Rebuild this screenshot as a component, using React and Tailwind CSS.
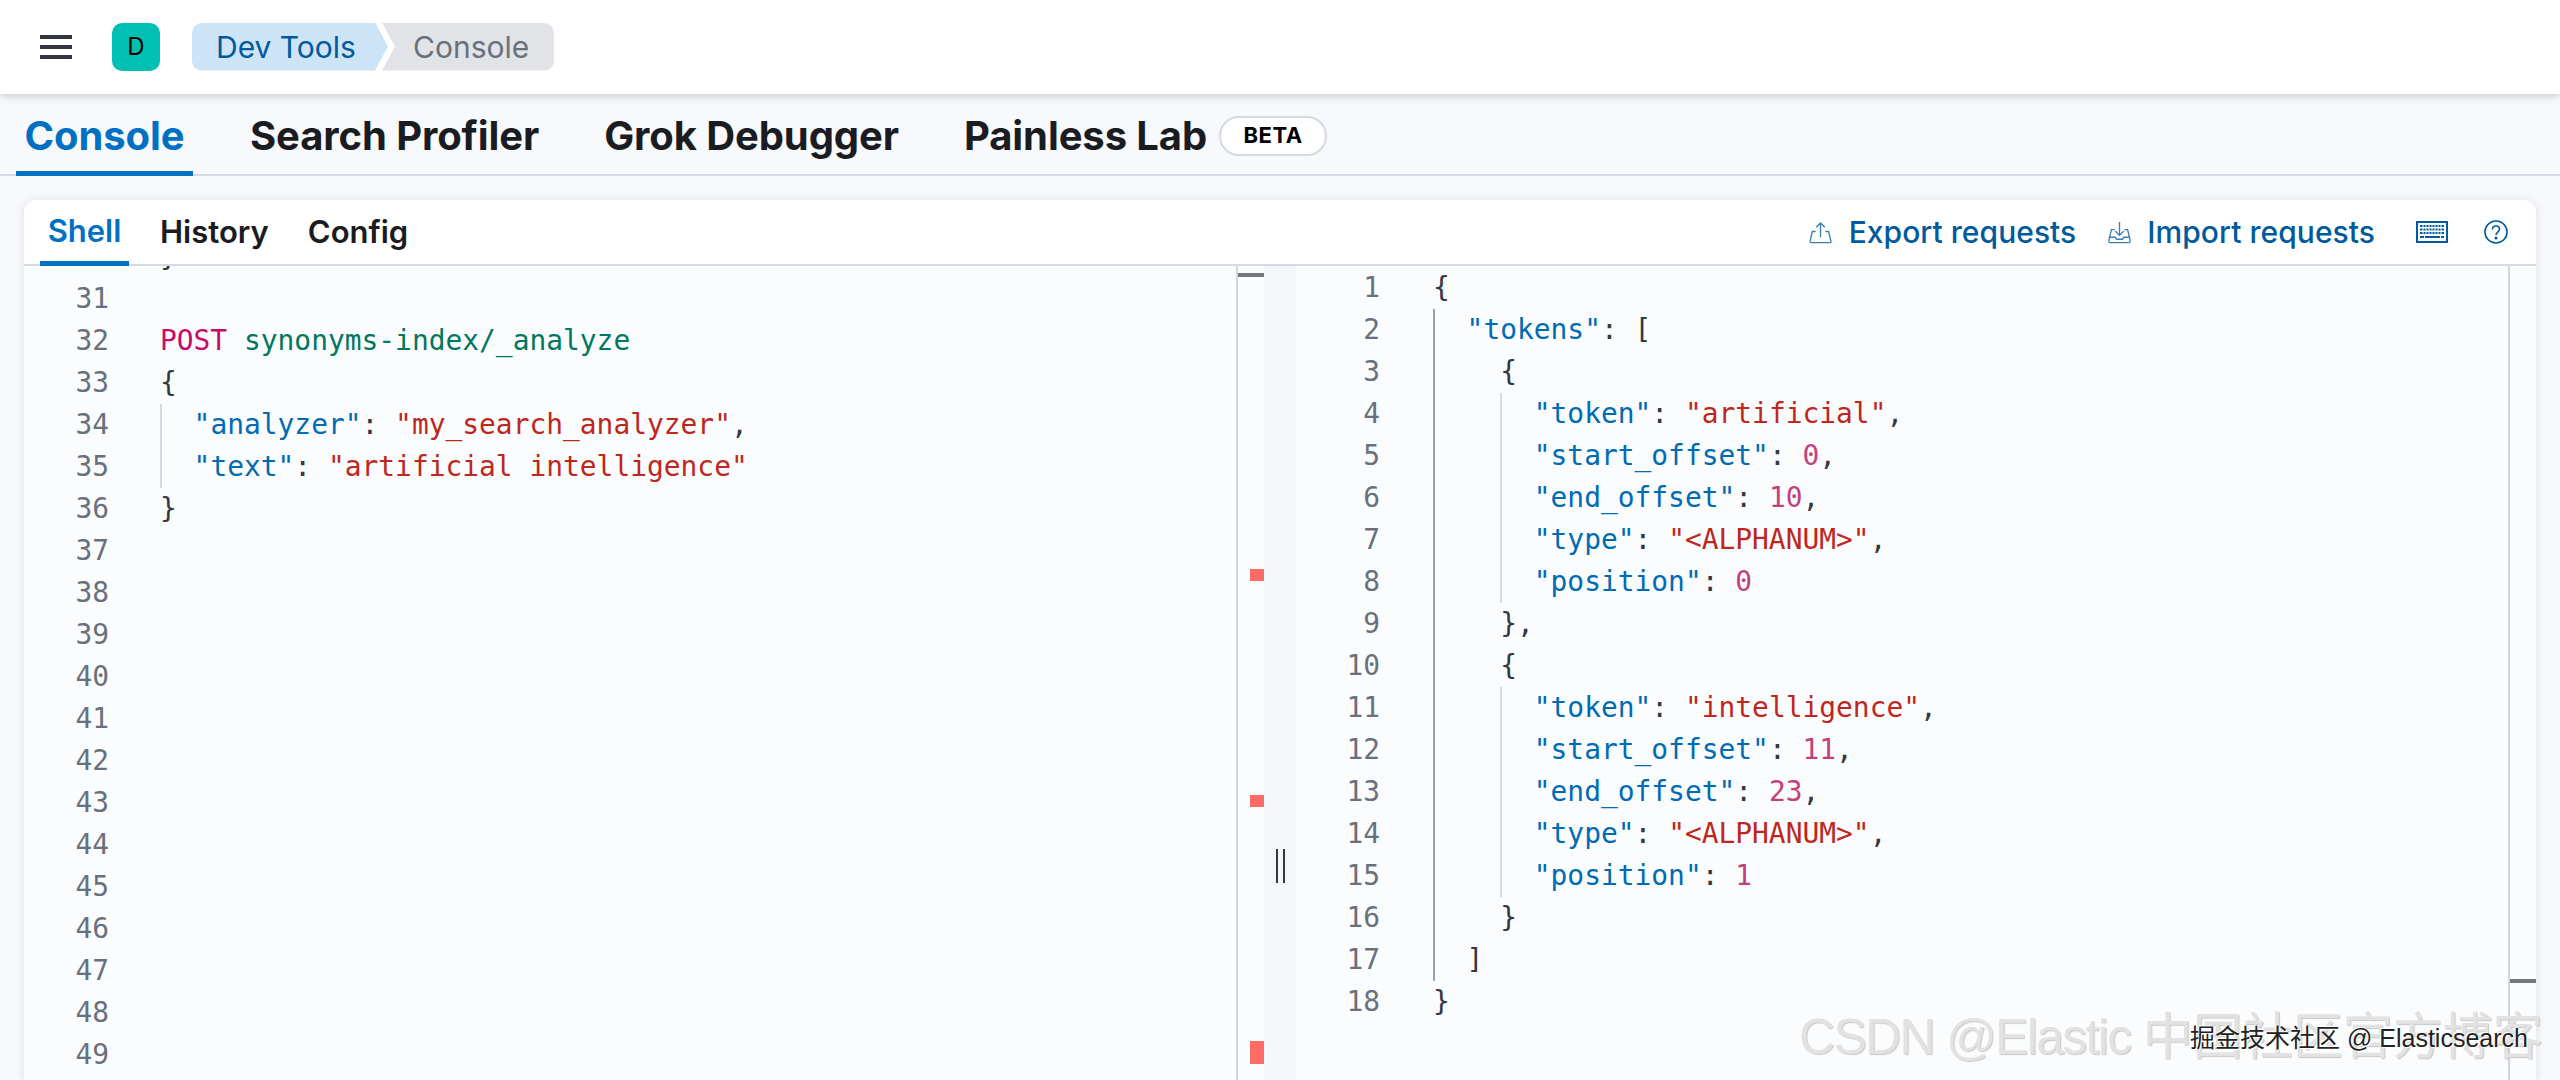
import React from "react";

const K = "text-[#006bb4]";
const S = "text-[#bd271e]";
const N = "text-[#c4407c]";
const P = "text-[#343741]";

const q = (t) => [`"${t}"`, K];
const v = (t) => [`"${t}"`, S];
const p = (t) => [t, P];
const n = (t) => [t, N];

const leftLines = [
  { no: 30, guides: [], toks: [p("}")] },
  { no: 31, guides: [], toks: [] },
  { no: 32, guides: [], toks: [["POST", "text-[#c80a68]"], p(" "), ["synonyms-index/_analyze", "text-[#00775f]"]] },
  { no: 33, guides: [], toks: [p("{")] },
  { no: 34, guides: ["l"], toks: [q("analyzer"), p(": "), v("my_search_analyzer"), p(",")] },
  { no: 35, guides: ["l"], toks: [q("text"), p(": "), v("artificial intelligence")] },
  { no: 36, guides: [], toks: [p("}")] },
  ...[37, 38, 39, 40, 41, 42, 43, 44, 45, 46, 47, 48, 49].map((no) => ({ no, guides: [], toks: [] })),
];

const obj = (start, token, so, eo, pos, last) => [
  { no: start, guides: ["d", "e"], toks: [p("{")] },
  { no: start + 1, guides: ["d", "e", "l"], toks: [q("token"), p(": "), v(token), p(",")] },
  { no: start + 2, guides: ["d", "e", "l"], toks: [q("start_offset"), p(": "), n(so), p(",")] },
  { no: start + 3, guides: ["d", "e", "l"], toks: [q("end_offset"), p(": "), n(eo), p(",")] },
  { no: start + 4, guides: ["d", "e", "l"], toks: [q("type"), p(": "), v("<ALPHANUM>"), p(",")] },
  { no: start + 5, guides: ["d", "e", "l"], toks: [q("position"), p(": "), n(pos)] },
  { no: start + 6, guides: ["d", "e"], toks: [p(last ? "}" : "},")] },
];

const rightLines = [
  { no: 1, guides: [], toks: [p("{")] },
  { no: 2, guides: ["d"], toks: [q("tokens"), p(": [")] },
  ...obj(3, "artificial", "0", "10", "0", false),
  ...obj(10, "intelligence", "11", "23", "1", true),
  { no: 17, guides: ["d"], toks: [p("]")] },
  { no: 18, guides: [], toks: [p("}")] },
];

function Guide({ kind }) {
  if (kind === "d") return <span className="inline-block h-[42px] w-[33.6px] shrink-0 border-l-2 border-[#98a2b3]" />;
  if (kind === "l") return <span className="inline-block h-[42px] w-[33.6px] shrink-0 border-l-2 border-[#d3dae6]" />;
  return <span className="inline-block h-[42px] w-[33.6px] shrink-0" />;
}

function CodeLine({ line, gutter, pad }) {
  return (
    <div className="flex h-[42px] shrink-0 leading-[42px] whitespace-pre">
      <div className={`${gutter} shrink-0 text-right text-[#69707d]`}>{line.no}</div>
      <div className={`${pad} shrink-0`} />
      <div className="flex">
        {line.guides.map((g, i) => (
          <Guide key={i} kind={g} />
        ))}
        <span>
          {line.toks.map(([t, c], i) => (
            <span key={i} className={c}>
              {t}
            </span>
          ))}
        </span>
      </div>
    </div>
  );
}

function ExportIcon() {
  return (
    <svg width="23" height="23" viewBox="0 0 24 24" fill="none" stroke="#3f7fb0" strokeWidth="1.4">
      <path d="M7 11H3.500L1 21.500a1 1 0 0 0 1 1h20a1 1 0 0 0 1-1L20.500 11H17" />
      <path d="M12 17V2M7.500 6.500 12 2l4.500 4.500" />
    </svg>
  );
}

function ImportIcon() {
  return (
    <svg width="23" height="23" viewBox="0 0 24 24" fill="none" stroke="#3f7fb0" strokeWidth="1.4">
      <path d="M7 9H3.500L1 20v1.500a1 1 0 0 0 1 1h20a1 1 0 0 0 1-1V20L20.500 9H17" />
      <path d="M1 17h6.500l1.500 2h6l1.500-2H23" />
      <path d="M12 15V1M7.500 10.500 12 15l4.500-4.500" />
    </svg>
  );
}

function KeyboardIcon() {
  return (
    <svg width="32" height="22" viewBox="0 0 32 22">
      <rect x="1" y="1" width="30" height="20" fill="#fff" stroke="#005a9c" strokeWidth="2" />
      <path d="M4 4h24v2H4zM4 7.500h24v2H4zM4 11h24v2H4z" fill="#005a9c" />
      <path d="M7 4v9M10 4v9M13 4v9M16 4v9M19 4v9M22 4v9M25 4v9" stroke="#fff" strokeWidth="1" />
      <path d="M4 15h4v2H4zM9 15h15v2H9zM25 15h3v2h-3z" fill="#005a9c" />
    </svg>
  );
}

function HelpIcon() {
  return (
    <svg width="24" height="24" viewBox="0 0 24 24" fill="none" stroke="#005a9c" strokeWidth="1.6">
      <circle cx="12" cy="12" r="11" />
      <path d="M8.500 9.500c0-2.200 1.500-3.500 3.500-3.500s3.500 1.300 3.500 3.200c0 2.800-3.500 2.900-3.500 5.800" />
      <circle cx="12" cy="18" r="0.800" fill="#005a9c" />
    </svg>
  );
}

export default function App() {
  return (
    <div className="relative flex h-[1080px] w-[2560px] flex-col overflow-hidden bg-[#f7f9fc] font-['Inter',sans-serif]">
      <header className="z-10 flex h-[94px] shrink-0 items-center bg-white pb-[1px] pl-[40px] shadow-[0_2px_8px_rgba(105,112,125,0.35)]">
        <div className="flex w-[32px] flex-col gap-[6px]">
          <div className="h-[4px] bg-[#343741]" />
          <div className="h-[4px] bg-[#343741]" />
          <div className="h-[4px] bg-[#343741]" />
        </div>
        <div className="ml-[40px] flex h-[48px] w-[48px] items-center justify-center rounded-[10px] bg-[#00bfb3] text-[24px] text-black">
          D
        </div>
        <nav className="ml-[32px] flex h-[48px] text-[30px] leading-[48px]">
          <div className="h-[48px] w-[196px] rounded-l-[10px] bg-[#cce4f5] pl-[24px] text-[#005a9c] [clip-path:polygon(0_0,183px_0,100%_50%,183px_100%,0_100%)]">
            Dev Tools
          </div>
          <div className="-ml-[6px] h-[48px] w-[172px] rounded-r-[10px] bg-[#e2e3e6] pl-[31px] text-[#69707d] [clip-path:polygon(0_0,100%_0,100%_100%,0_100%,13px_50%)]">
            Console
          </div>
        </nav>
      </header>

      <div className="flex h-[82px] shrink-0 items-stretch border-b-2 border-[#d3dae6] pl-[16px] text-[40px] font-bold tracking-[-0.1px] text-[#1a1c21]">
        <div className="-mb-[2px] flex w-[177px] items-center justify-center border-b-[5px] border-[#0071c2] pt-[6px] text-[#0071c2]">
          Console
        </div>
        <div className="ml-[57px] flex items-center pt-[3px]">Search Profiler</div>
        <div className="ml-[65px] flex items-center pt-[3px]">Grok Debugger</div>
        <div className="ml-[65px] flex items-center pt-[3px]">Painless Lab</div>
        <div className="ml-[12px] flex items-center pt-[3px]">
          <span className="flex h-[40px] w-[108px] items-center justify-center rounded-full border-2 border-[#d3dae6] bg-white text-[22px] font-bold tracking-[0.5px] text-black">
            BETA
          </span>
        </div>
      </div>

      <main className="mx-[24px] mt-[24px] flex min-h-0 flex-1 flex-col rounded-t-[12px] bg-white shadow-[0_1px_10px_rgba(105,112,125,0.2)]">
        <div className="flex h-[66px] shrink-0 items-stretch border-b-2 border-[#d3dae6] pl-[16px] pr-[28px]">
          <div className="flex text-[31px] font-semibold text-[#1a1c21]">
            <div className="-mb-[2px] flex w-[89px] items-center justify-center border-b-[5px] border-[#0071c2] pt-[2px] text-[#0071c2]">
              Shell
            </div>
            <div className="ml-[31px] flex items-center">History</div>
            <div className="ml-[39px] flex items-center">Config</div>
          </div>
          <div className="ml-auto flex items-center text-[30px] font-medium tracking-[0.05px] text-[#005a9c]">
            <ExportIcon />
            <span className="ml-[17px]">Export requests</span>
            <span className="ml-[32px] flex">
              <ImportIcon />
            </span>
            <span className="ml-[16px]">Import requests</span>
            <span className="ml-[41px] flex">
              <KeyboardIcon />
            </span>
            <span className="ml-[36px] flex">
              <HelpIcon />
            </span>
          </div>
        </div>

        <div className="flex min-h-0 flex-1 overflow-hidden bg-[#fbfcfd] font-['DejaVu_Sans_Mono',monospace] text-[27.9px]">
          <section className="w-[1212px] shrink-0 overflow-hidden">
            <div className="-mt-[30px] flex flex-col">
              {leftLines.map((l) => (
                <CodeLine key={l.no} line={l} gutter="w-[85px]" pad="w-[51px]" />
              ))}
            </div>
          </section>

          <aside className="flex w-[28px] shrink-0 flex-col border-l-2 border-[#d3d6dc]">
            <div className="mt-[7px] h-[4px] w-full bg-[#737880]" />
            <div className="ml-[12px] mt-[292px] h-[12px] w-[14px] bg-[#ff6b66]" />
            <div className="ml-[12px] mt-[214px] h-[12px] w-[14px] bg-[#ff6b66]" />
            <div className="ml-[12px] mt-[234px] h-[23px] w-[14px] bg-[#ff6b66]" />
          </aside>

          <div className="flex w-[32px] shrink-0 flex-col items-center bg-[#f4f6fa] pt-[583px]">
            <div className="flex h-[34px] w-[9px] justify-between">
              <div className="w-[2px] bg-[#343741]" />
              <div className="w-[2px] bg-[#343741]" />
            </div>
          </div>

          <section className="min-w-0 flex-1 pt-[1px]">
            <div className="flex flex-col">
              {rightLines.map((l) => (
                <CodeLine key={l.no} line={l} gutter="w-[84px]" pad="w-[53px]" />
              ))}
            </div>
          </section>

          <aside className="flex w-[28px] shrink-0 flex-col border-l-2 border-[#d3d6dc]">
            <div className="mt-[713px] h-[4px] w-full bg-[#737880]" />
          </aside>
        </div>
      </main>

      <div className="pointer-events-none absolute left-[1799px] top-[1007px] whitespace-nowrap font-['Liberation_Sans','Noto_Sans_CJK_SC',sans-serif] text-[50px] leading-[60px] text-[#e2e2e2] [text-shadow:1px_1px_1px_#c8c8c8]">
        <span className="tracking-[-1.7px]">CSDN @Elastic </span>
        <span>中国社区官方博客</span>
      </div>
      <div className="pointer-events-none absolute left-[2190px] top-[1020px] whitespace-nowrap font-['Liberation_Sans','Noto_Sans_CJK_SC',sans-serif] text-[25px] leading-[36px] text-[#222] [text-shadow:1px_1px_0_#fff,-1px_-1px_0_#fff]">
        掘金技术社区 @ Elasticsearch
      </div>
    </div>
  );
}
